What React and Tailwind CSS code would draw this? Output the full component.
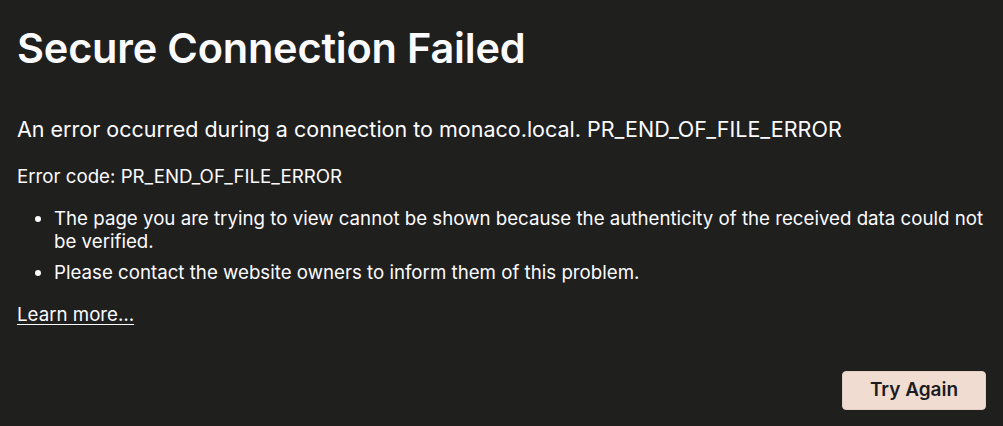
export default function App() {
  return (
    <div className="min-h-[426px] w-full bg-[#1f1f1e] text-[#fbfbfe] font-['Inter',sans-serif] px-[17px] pt-[23px]">
      <h1 className="text-[41.5px] font-semibold leading-[50px] tracking-[-0.2px]">
        Secure Connection Failed
      </h1>

      <p className="mt-[41px] text-[21.5px] leading-[30px]">
        An error occurred during a connection to monaco.local. PR_END_OF_FILE_ERROR
      </p>

      <p className="mt-[20px] text-[18.7px] leading-[26px]">
        Error code: PR_END_OF_FILE_ERROR
      </p>

      <ul className="mt-[17px] list-disc pl-[37px] text-[18.7px] leading-[23px]">
        <li>
          The page you are trying to view cannot be shown because the authenticity of
          the received data could not be verified.
        </li>
        <li className="mt-[8px]">
          Please contact the website owners to inform them of this problem.
        </li>
      </ul>

      <a href="#" className="mt-[18px] inline-block text-[18.7px] leading-[26px] underline underline-offset-[3px]">
        Learn more…
      </a>

      <div className="mt-[43px] flex justify-end">
        <button
          type="button"
          className="h-[39px] w-[144px] rounded-[4px] border border-[#e2cfc3] bg-[#f0dcd0] text-[#1c1b22] text-[19px] font-semibold"
        >
          Try Again
        </button>
      </div>
    </div>
  );
}
